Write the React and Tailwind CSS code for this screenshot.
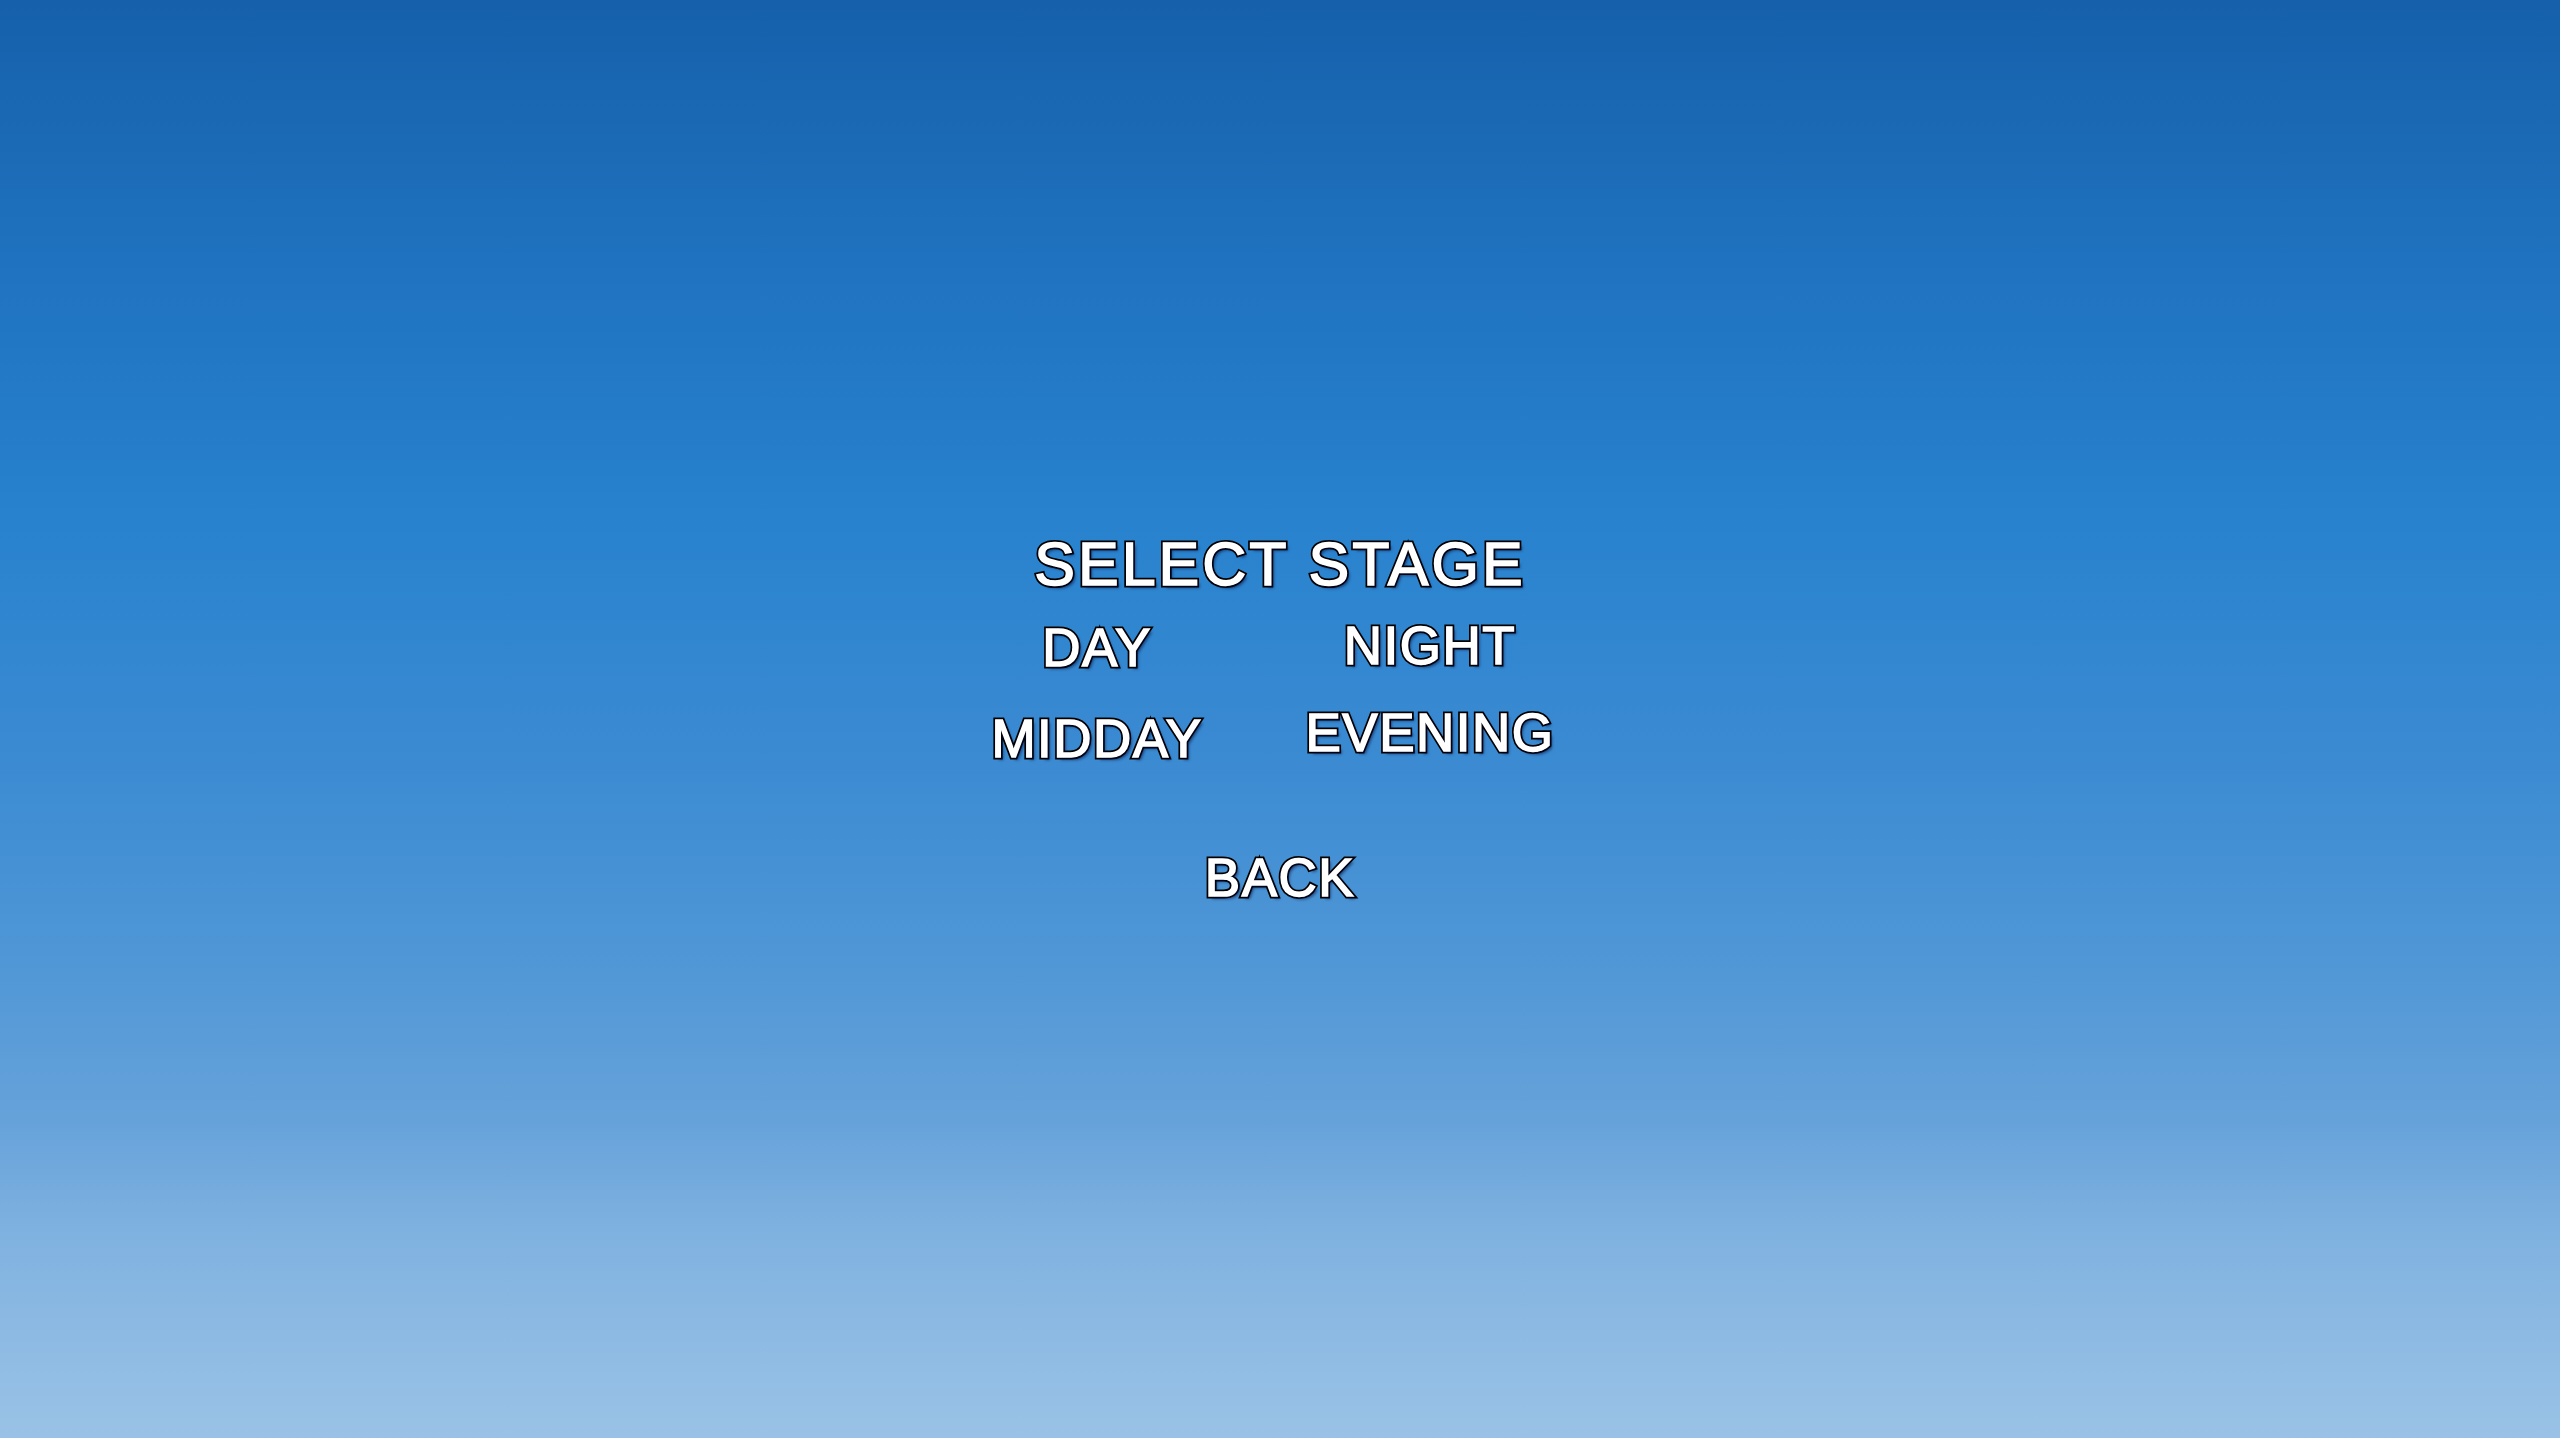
import React from "react";

const font = "[font-family:'Liberation_Sans',Arial,sans-serif] leading-none font-normal";

function Outlined({ children, className = "" }) {
  return (
    <div className={`grid ${font} ${className}`}>
      <span className="[grid-area:1/1] text-white [-webkit-text-stroke:5px_#000] [paint-order:stroke_fill] [text-shadow:3px_3px_3px_rgba(0,10,50,0.55)]">
        {children}
      </span>
      <span className="[grid-area:1/1] text-white [-webkit-text-stroke:1.5px_#fff]">
        {children}
      </span>
    </div>
  );
}

export default function App() {
  return (
    <div className="w-full h-screen flex flex-col items-center justify-center bg-[linear-gradient(to_bottom,#1660ab_0%,#1f72bf_18%,#2882ce_36%,#3a8ad2_52%,#4e96d6_66%,#66a2da_78%,#80b2e0_86%,#9ac2e6_100%)]">
      <Outlined className="text-[61px] tracking-[3px]">SELECT STAGE</Outlined>
      <div className="mt-[24px] mr-[33px] grid grid-cols-[300px_300px] gap-x-[33px] gap-y-[32px] items-start justify-items-center">
        <Outlined className="text-[53px] tracking-[1.5px] mt-[2px]">DAY</Outlined>
        <Outlined className="text-[53px] tracking-[1.5px]">NIGHT</Outlined>
        <Outlined className="text-[53px] tracking-[1.5px] mt-[6px]">MIDDAY</Outlined>
        <Outlined className="text-[53px] tracking-[1.5px]">EVENING</Outlined>
      </div>
      <Outlined className="mt-[86px] text-[53px] tracking-[1.5px]">BACK</Outlined>
    </div>
  );
}
